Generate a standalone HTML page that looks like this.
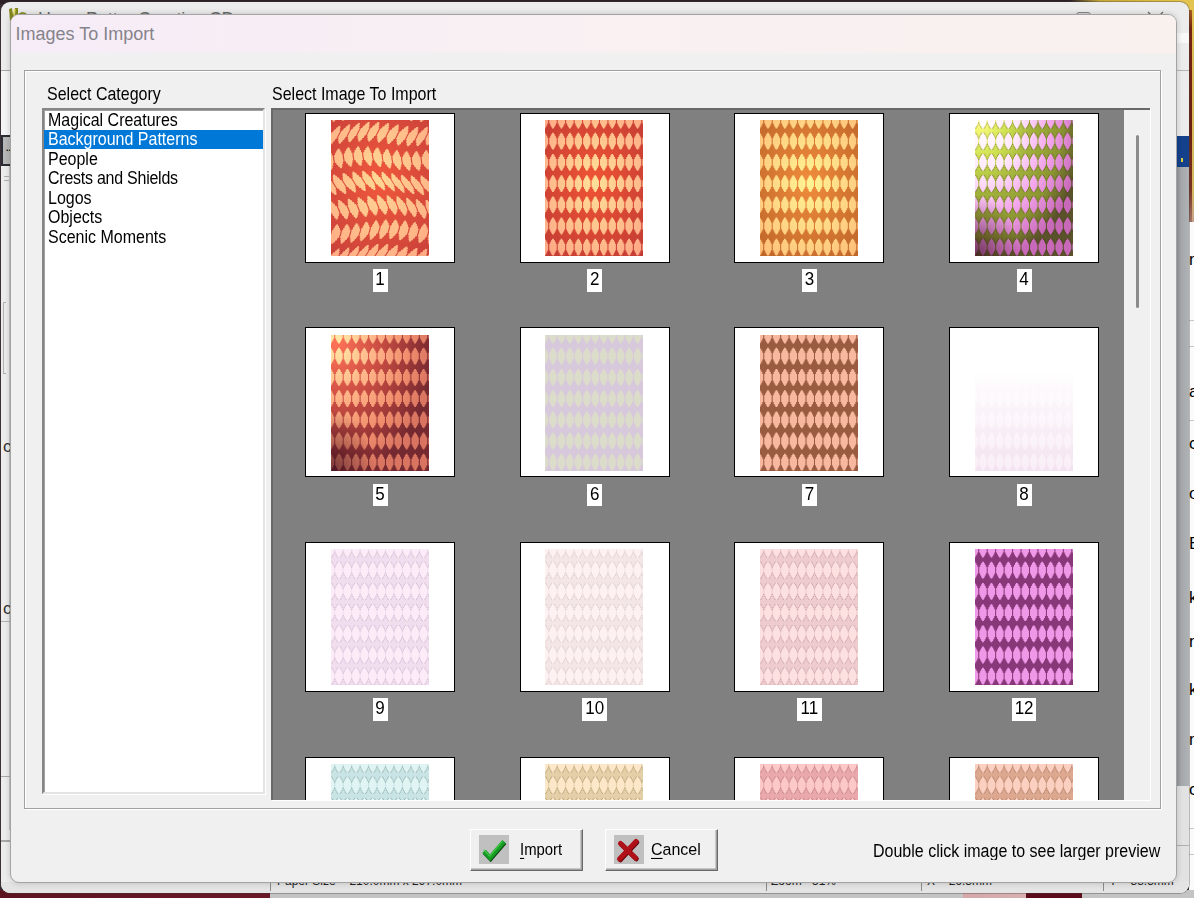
<!DOCTYPE html>
<html><head><meta charset="utf-8"><title>Images To Import</title>
<style>
html,body{margin:0;padding:0}
body{width:1194px;height:898px;position:relative;overflow:hidden;background:#3a2c34;font-family:"Liberation Sans",sans-serif;font-size:16px;color:#000}
div{box-sizing:border-box}
.abs{position:absolute}
#desk-top{left:0;top:0;width:1194px;height:4px;background:linear-gradient(90deg,#2a2026 0,#2a2026 1070px,#c8a838 1100px,#e8c848 1194px)}
#desk-right{left:1180px;top:0;width:14px;height:222px;background:linear-gradient(180deg,#e4c450 0,#dcbc58 60px,#d8b860 190px,#c8a088 222px)}
#desk-right:after{content:"";position:absolute;left:8px;top:10px;width:3.5px;height:212px;background:linear-gradient(180deg,#a85c20 0,#742414 18px,#6a2012 120px,#7a3424 180px,#a07468 212px)}
#desk-right2{left:1189px;top:222px;width:5px;height:676px;background:#fbfbfb;font-size:17px;overflow:hidden}
#desk-right2 span{position:absolute;left:0;white-space:nowrap}
#desk-right2 i{position:absolute;left:0;width:5px;height:1px;background:#c8c8c8}
#desk-bot{left:0;top:890px;width:1194px;height:8px;background:linear-gradient(90deg,#5c1420 0,#6a1826 270px,#c4c4c4 270px,#c4c4c4 963px,#d4a8a8 963px,#d8b0b0 1026px,#5c0c18 1026px,#5c0c18 1082px,#c4c4c4 1082px)}
#parent{left:1px;top:1.5px;width:1188px;height:891.5px;border-radius:9px;background:#ececec;overflow:hidden;box-shadow:0 0 0 1px rgba(60,60,60,.35)}
#ptitle{left:37px;top:7px;font-size:18px;color:#6a6a6a;white-space:nowrap;letter-spacing:-.15px}
#picon{left:6px;top:4px;width:22px;height:18px}
#pmax{left:1075px;top:10px;width:15px;height:12px;border:1.5px solid #8a8a8a;border-radius:3px;background:#d4d4d4}
#pclose{left:1144px;top:8px;font-size:22px;color:#707070;line-height:22px}
#pleft{left:0;top:68px;width:10px;height:760px}
#pright{left:1174px;top:0;width:14px;height:891px}
#status{left:0;top:880px;width:1188px;height:12px;background:#e4e4e4;font-size:12px;color:#222;overflow:hidden}
#status span{position:absolute;top:-7.5px;white-space:nowrap}
#status i{position:absolute;top:0;width:1px;height:9px;background:#8c8c8c}
#dlg{left:10px;top:14px;width:1166.5px;height:868.5px;border:1px solid #a3a3a3;border-radius:9px;background:#f0f0f0;overflow:hidden;box-shadow:0 0 6px rgba(0,0,0,.18)}
#tbar{left:0;top:0;width:1165px;height:39.5px;background:linear-gradient(90deg,#f6ecf8 0,#f8f0f2 45%,#f9f1ee 100%)}
#tbar:after{content:"";position:absolute;left:0;top:36px;width:100%;height:3.5px;background:linear-gradient(180deg,rgba(240,240,240,0),#f0f0f0)}
#ttext{left:4.5px;top:8.3px;font-size:18px;color:#85838a;white-space:nowrap;line-height:22px}
.lbl{white-space:nowrap;line-height:18px;transform:scaleY(1.14);transform-origin:0 100%}
#frame{left:13px;top:55px;width:1137px;height:739px;border:1px solid #a0a0a0;box-shadow:inset 1px 1px 0 #fff,1px 1px 0 #fff}
#list{left:31px;top:93px;width:223px;height:686px;background:#fff;border:2px solid;border-color:#868686 #e3e3e3 #e3e3e3 #868686;box-shadow:inset 1px 1px 0 #a0a0a0,1px 1px 0 #fff}
#list div{position:absolute;left:0;width:219px;height:19.5px;line-height:19.5px;padding-left:4px;white-space:nowrap}
#list div span{display:inline-block;transform:scaleY(1.09);transform-origin:0 78%;position:relative;top:.8px}
#list .sel{background:#0078d7;color:#fff}
#panel{left:260px;top:93px;width:878.5px;height:691.5px;background:#808080;border-top:2px solid #696969;border-left:2px solid #696969;overflow:hidden;box-shadow:1px 1px 0 #fff}
.th{position:absolute;width:150px;height:150px;background:#fff;border:1.5px solid #000}
.pat{position:absolute;left:24.8px;top:6.3px}
.num{position:absolute;height:22.6px;background:#fff;text-align:center;line-height:22.2px;font-size:17px}
.num span{display:inline-block;transform:scaleY(1.13);transform-origin:50% 60%}
.num{transform-origin:50% 50%}
#sb{left:850.5px;top:0;width:26px;height:690px;background:#f0f0f0}
#sbt{left:12.5px;top:25px;width:3px;height:173px;background:#8b8b8b;border-radius:1.5px}
.btn{height:42px;width:113px;background:#f0f0f0;border:1.5px solid;border-color:#fff #696969 #696969 #fff;box-shadow:inset -1.5px -1.5px 0 #a0a0a0}
.btn .ic{position:absolute;left:7.5px;top:4.5px;width:30px;height:29px;background:#c0c0c0}
.btn .tx{position:absolute;top:10.5px;line-height:18px;white-space:nowrap;transform:scaleY(1.06);transform-origin:0 100%}
.btn u{text-decoration-thickness:1px;text-underline-offset:2.5px}
</style></head><body>
<svg width="0" height="0" style="position:absolute"><defs>
<polygon id="dm" points="0.90,-8.40 0.90,-7.20 1.80,-7.20 1.80,-5.40 2.80,-5.40 2.80,-3.40 3.70,-3.40 3.70,0.00 3.70,0.00 3.70,3.40 2.80,3.40 2.80,5.40 1.80,5.40 1.80,7.20 0.90,7.20 0.90,8.40 -0.90,8.40 -0.90,7.20 -1.80,7.20 -1.80,5.40 -2.80,5.40 -2.80,3.40 -3.70,3.40 -3.70,0.00 -3.70,0.00 -3.70,-3.40 -2.80,-3.40 -2.80,-5.40 -1.80,-5.40 -1.80,-7.20 -0.90,-7.20 -0.90,-8.40"/>
<g id="drow"><use href="#dm" x="-0.49"/><use href="#dm" x="7.97"/><use href="#dm" x="16.43"/><use href="#dm" x="24.89"/><use href="#dm" x="33.35"/><use href="#dm" x="41.81"/><use href="#dm" x="50.27"/><use href="#dm" x="58.73"/><use href="#dm" x="67.19"/><use href="#dm" x="75.65"/><use href="#dm" x="84.11"/><use href="#dm" x="92.57"/><use href="#dm" x="101.03"/></g>
<g id="dgrid"><use href="#drow" y="0.00"/><use href="#drow" y="21.20"/><use href="#drow" y="42.40"/><use href="#drow" y="63.60"/><use href="#drow" y="84.80"/><use href="#drow" y="106.00"/><use href="#drow" y="127.20"/><use href="#drow" y="148.40"/></g>
<g id="dc"><rect x="-4.65" y="-3.65" width="1.1" height="1.1"/><rect x="-4.65" y="2.55" width="1.1" height="1.1"/><rect x="3.55" y="-3.65" width="1.1" height="1.1"/><rect x="3.55" y="2.55" width="1.1" height="1.1"/><rect x="-3.75" y="-5.65" width="1.1" height="1.1"/><rect x="-3.75" y="4.55" width="1.1" height="1.1"/><rect x="2.65" y="-5.65" width="1.1" height="1.1"/><rect x="2.65" y="4.55" width="1.1" height="1.1"/><rect x="-2.75" y="-7.45" width="1.1" height="1.1"/><rect x="-2.75" y="6.35" width="1.1" height="1.1"/><rect x="1.65" y="-7.45" width="1.1" height="1.1"/><rect x="1.65" y="6.35" width="1.1" height="1.1"/><rect x="-1.85" y="-8.65" width="1.1" height="1.1"/><rect x="-1.85" y="7.55" width="1.1" height="1.1"/><rect x="0.75" y="-8.65" width="1.1" height="1.1"/><rect x="0.75" y="7.55" width="1.1" height="1.1"/></g>
<g id="dcrow"><use href="#dc" x="-0.49"/><use href="#dc" x="7.97"/><use href="#dc" x="16.43"/><use href="#dc" x="24.89"/><use href="#dc" x="33.35"/><use href="#dc" x="41.81"/><use href="#dc" x="50.27"/><use href="#dc" x="58.73"/><use href="#dc" x="67.19"/><use href="#dc" x="75.65"/><use href="#dc" x="84.11"/><use href="#dc" x="92.57"/><use href="#dc" x="101.03"/></g>
<g id="dcgrid"><use href="#dcrow" y="0.00"/><use href="#dcrow" y="21.20"/><use href="#dcrow" y="42.40"/><use href="#dcrow" y="63.60"/><use href="#dcrow" y="84.80"/><use href="#dcrow" y="106.00"/><use href="#dcrow" y="127.20"/><use href="#dcrow" y="148.40"/></g>
<mask id="m" maskUnits="userSpaceOnUse" x="0" y="0" width="98" height="136"><use href="#dgrid" fill="#fff"/></mask>
<mask id="md" maskUnits="userSpaceOnUse" x="0" y="0" width="98" height="136"><use href="#dcgrid" fill="#fff"/></mask>
<clipPath id="cp"><rect width="98" height="136"/></clipPath>
<radialGradient id="d1" cx="50%" cy="45%" r="75%"><stop offset="0" stop-color="#f0583c"/><stop offset="1" stop-color="#c8403a"/></radialGradient>
<radialGradient id="l1" cx="50%" cy="45%" r="75%"><stop offset="0" stop-color="#ffd894"/><stop offset="1" stop-color="#ffa080"/></radialGradient>
<radialGradient id="d2" cx="50%" cy="45%" r="75%"><stop offset="0" stop-color="#f05434"/><stop offset="1" stop-color="#c03a34"/></radialGradient>
<radialGradient id="l2" cx="50%" cy="45%" r="75%"><stop offset="0" stop-color="#ffe098"/><stop offset="1" stop-color="#ffa484"/></radialGradient>
<radialGradient id="d3" cx="50%" cy="45%" r="75%"><stop offset="0" stop-color="#f08c3c"/><stop offset="1" stop-color="#bc6428"/></radialGradient>
<radialGradient id="l3" cx="50%" cy="45%" r="75%"><stop offset="0" stop-color="#fff494"/><stop offset="1" stop-color="#ffbc78"/></radialGradient>
<radialGradient id="d4" cx="0.05" cy="0.0" r="1.05"><stop offset="0" stop-color="#ffff80"/><stop offset=".28" stop-color="#cce050"/><stop offset=".5" stop-color="#a2b23c"/><stop offset=".8" stop-color="#8a9432"/><stop offset="1" stop-color="#5a5228"/></radialGradient>
<radialGradient id="l4" cx="0.05" cy="0.0" r="1.05"><stop offset="0" stop-color="#ffffff"/><stop offset=".38" stop-color="#ffe8fc"/><stop offset=".7" stop-color="#f2a4ea"/><stop offset="1" stop-color="#c868b8"/></radialGradient>
<radialGradient id="d5" cx="0.05" cy="0.05" r="1.0"><stop offset="0" stop-color="#ff7458"/><stop offset=".4" stop-color="#d05044"/><stop offset=".75" stop-color="#9c3838"/><stop offset="1" stop-color="#742830"/></radialGradient>
<radialGradient id="l5" cx="0.05" cy="0.05" r="1.0"><stop offset="0" stop-color="#ffeca8"/><stop offset=".4" stop-color="#ffb488"/><stop offset=".75" stop-color="#f08c6c"/><stop offset="1" stop-color="#d87460"/></radialGradient>
<radialGradient id="vg" cx="0" cy="1" r="0.45"><stop offset="0" stop-color="#300818" stop-opacity=".6"/><stop offset="1" stop-color="#300818" stop-opacity="0"/></radialGradient>
<linearGradient id="d8" x1="0" y1="0" x2="0" y2="1"><stop offset="0" stop-color="#ffffff"/><stop offset="0.25" stop-color="#ffffff"/><stop offset="1" stop-color="#f3e2f0"/></linearGradient>
<linearGradient id="l8" x1="0" y1="0" x2="0" y2="1"><stop offset="0" stop-color="#ffffff"/><stop offset="0.25" stop-color="#ffffff"/><stop offset="1" stop-color="#f9eef7"/></linearGradient>
</defs></svg>
<div class="abs" id="desk-top"></div>
<div class="abs" id="desk-right"></div>
<div class="abs" id="desk-right2">
<span style="top:28px">n</span><i style="top:98px"></i><i style="top:124px"></i><span style="top:160px">a</span><i style="top:198px"></i><span style="top:212px">c</span><span style="top:262px">o</span><span style="top:312px">B</span><span style="top:366px">k</span><span style="top:410px">n</span><span style="top:458px">k</span><span style="top:508px">n</span><span style="top:558px">c</span><i style="top:606px"></i><i style="top:632px"></i>
</div>
<div class="abs" id="desk-bot"></div>

<div class="abs" id="parent">
 <svg class="abs" id="picon" viewBox="0 0 22 18"><path d="M2 3 L5 2 L6 9 L8 2 L11 2 L11 8 L15 6 L19 7 L20 10 L16 12 L10 13 L7 18 L3 15 Z" fill="#84881c"/><path d="M6.5 3 L8.5 3 L8 10 L6.5 11Z" fill="#e4dc68"/><path d="M12 8 L17 7.5 L17 10 L12 10.5Z" fill="#a8a838"/></svg>
 <div class="abs" id="ptitle">Harry Potter Creative CD</div>
 <div class="abs" id="pmax"></div>
 <svg class="abs" style="left:1146px;top:9px" width="17" height="17" viewBox="0 0 17 17"><path d="M1 1 L16 16 M16 1 L1 16" stroke="#6c6c6c" stroke-width="1.4" fill="none"/></svg>
 <div class="abs" id="pleft">
  <div class="abs" style="left:0;top:0;width:10px;height:1px;background:#a8a8a8"></div>
  <div class="abs" style="left:0;top:1px;width:10px;height:64px;background:#f4f4f4;border-right:1px solid #b4b4b4"></div>
  <div class="abs" style="left:0;top:65px;width:10px;height:31px;background:#b8b8b8;border:2px solid #2c2c34;border-right:none;font-size:9px;line-height:22px;font-weight:bold;text-align:right">..</div>
  <div class="abs" style="left:3px;top:106px;width:6px;height:1px;background:#b0b0b0"></div>
  <div class="abs" style="left:3px;top:110px;width:6px;height:1px;background:#b0b0b0"></div>
  <div class="abs" style="left:8px;top:96px;width:1px;height:664px;background:#c4c4c4"></div>
  <div class="abs" style="left:2px;top:232px;width:3px;height:72px;border:1px solid #b0b0b0;border-right:none"></div>
  <div class="abs" style="left:2px;top:368px;font-size:17px;line-height:18px;color:#333">c</div>
  <div class="abs" style="left:2px;top:530px;font-size:17px;line-height:18px;color:#333">c</div>
  <div class="abs" style="left:0;top:551px;width:9px;height:1px;background:#b0b0b0"></div>
  <div class="abs" style="left:0;top:706px;width:9px;height:1px;background:#a8a8a8"></div>
  <div class="abs" style="left:0;top:770px;width:9px;height:2px;background:#a8a8a8"></div>
 </div>
 <div class="abs" id="pright">
  <div class="abs" style="left:0;top:31px;width:14px;height:10px;background:#f8f8f8"></div>
  <div class="abs" style="left:0;top:68px;width:14px;height:1px;background:#b4b4b4"></div>
  <div class="abs" style="left:0;top:134px;width:14px;height:31px;background:#14408c"><div class="abs" style="left:6px;top:22px;width:2px;height:4px;background:#d8d040"></div></div>
  <div class="abs" style="left:0;top:165px;width:14px;height:619px;background:linear-gradient(90deg,#8a8e92,#a4a7aa 40%,#b0b3b6)"></div>
  <div class="abs" style="left:0;top:784px;width:14px;height:107px;background:#e2e2e2"></div>
  <div class="abs" style="left:0;top:843px;width:14px;height:1px;background:#b0b0b0"></div>
 </div>
 <div class="abs" id="status">
  <i style="left:269px"></i><span style="left:276px">Paper Size = 210.0mm x 297.0mm</span>
  <i style="left:765px"></i><span style="left:770px">Zoom= 51%</span>
  <i style="left:920px"></i><span style="left:926px">X = 26.3mm</span>
  <i style="left:1102px"></i><span style="left:1108px">Y = 38.3mm</span>
 </div>
</div>

<div class="abs" id="dlg">
 <div class="abs" id="tbar"></div>
 <div class="abs" id="ttext">Images To Import</div>
 <div class="abs" id="frame"></div>
 <div class="abs lbl" style="left:36px;top:72.2px">Select Category</div>
 <div class="abs lbl" style="left:261px;top:72.2px">Select Image To Import</div>
 <div class="abs" id="list">
  <div style="top:0"><span>Magical Creatures</span></div>
  <div style="top:19.5px" class="sel"><span>Background Patterns</span></div>
  <div style="top:39px"><span>People</span></div>
  <div style="top:58.5px"><span style="letter-spacing:-.25px">Crests and Shields</span></div>
  <div style="top:78px"><span>Logos</span></div>
  <div style="top:97.5px"><span>Objects</span></div>
  <div style="top:117px"><span>Scenic Moments</span></div>
 </div>
 <div class="abs" id="panel">
<div class="th" style="left:32.1px;top:2.9px"><svg class="pat" width="98" height="136" viewBox="0 0 98 136"><rect width="98" height="136" fill="url(#d1)"/><path clip-path="url(#cp)" fill="url(#l1)" d="M-2.6 103.8L-2.6 105.2L-1.6 105.3L-1.8 107.4L-0.6 107.5L-0.9 109.8L0.1 109.9L-0.8 113.8L-0.8 113.8L-2.1 117.7L-3.1 117.6L-4.0 119.9L-5.2 119.8L-6.1 121.9L-7.2 121.8L-7.8 123.1L-9.9 122.9L-9.2 121.5L-10.3 121.4L-9.3 119.3L-10.5 119.2L-9.5 116.9L-10.6 116.7L-9.3 112.8L-9.3 112.8L-8.4 108.9L-7.4 109.0L-7.0 106.7L-5.9 106.9L-5.7 104.8L-4.7 105.0L-4.7 103.6ZM4.2 -17.4L3.7 -16.0L4.7 -16.0L3.8 -13.9L4.9 -13.9L3.8 -11.6L4.8 -11.6L2.7 -7.7L2.7 -7.7L0.4 -3.8L-0.7 -3.8L-2.1 -1.5L-3.3 -1.5L-4.6 0.6L-5.6 0.6L-6.5 1.9L-8.6 1.9L-7.7 0.5L-8.7 0.4L-7.4 -1.6L-8.6 -1.7L-7.1 -4.0L-8.2 -4.1L-5.8 -8.0L-5.8 -8.0L-3.7 -11.9L-2.6 -11.8L-1.5 -14.1L-0.4 -14.1L0.6 -16.1L1.6 -16.1L2.2 -17.5ZM-0.8 80.1L-0.0 81.5L1.0 81.5L2.1 83.6L3.3 83.6L4.5 85.9L5.5 85.9L7.2 89.8L7.2 89.8L8.6 93.7L7.6 93.7L8.2 96.0L7.1 96.0L7.5 98.1L6.5 98.1L6.7 99.5L4.7 99.4L4.4 98.0L3.4 97.9L3.0 95.9L1.8 95.8L1.2 93.5L0.1 93.4L-1.3 89.5L-1.3 89.5L-3.0 85.6L-2.0 85.7L-3.2 83.4L-2.0 83.5L-3.1 81.4L-2.1 81.4L-2.9 80.1ZM7.1 104.5L7.1 105.9L8.1 105.9L8.0 108.0L9.1 108.0L8.8 110.3L9.8 110.3L9.0 114.2L9.0 114.2L7.7 118.1L6.6 118.1L5.7 120.4L4.5 120.4L3.6 122.5L2.6 122.5L1.9 123.8L-0.2 123.8L0.5 122.4L-0.5 122.3L0.4 120.3L-0.7 120.2L0.2 117.9L-0.8 117.8L0.4 113.9L0.4 113.9L1.3 110.0L2.4 110.1L2.7 107.8L3.8 107.8L4.0 105.8L5.0 105.8L5.1 104.4ZM14.0 -17.6L13.4 -16.3L14.4 -16.3L13.5 -14.3L14.7 -14.4L13.5 -12.1L14.6 -12.2L12.4 -8.3L12.4 -8.3L10.1 -4.3L9.0 -4.2L7.6 -1.9L6.5 -1.8L5.1 0.2L4.1 0.3L3.2 1.7L1.1 1.8L2.0 0.4L1.0 0.5L2.3 -1.6L1.2 -1.5L2.6 -3.8L1.6 -3.8L3.9 -7.7L3.9 -7.7L6.1 -11.6L7.1 -11.7L8.2 -14.0L9.4 -14.0L10.3 -16.1L11.3 -16.1L11.9 -17.5ZM-0.1 6.7L-0.9 8.1L0.1 8.0L-1.2 10.1L-0.0 10.0L-1.4 12.3L-0.3 12.2L-2.5 16.1L-2.5 16.1L-4.3 20.0L-5.3 20.1L-6.3 22.4L-7.4 22.5L-8.2 24.6L-9.2 24.7L-9.6 26.1L-11.7 26.2L-11.3 24.8L-12.3 24.9L-11.6 22.8L-12.7 22.8L-11.8 20.5L-12.8 20.6L-11.0 16.7L-11.0 16.7L-8.8 12.7L-7.8 12.7L-6.4 10.4L-5.3 10.4L-4.0 8.3L-3.0 8.3L-2.1 6.9ZM-6.0 55.5L-5.2 56.9L-4.2 56.8L-3.1 58.9L-1.9 58.8L-0.6 61.1L0.4 61.0L2.8 64.9L2.8 64.9L5.3 68.8L4.3 68.9L5.8 71.2L4.6 71.3L6.0 73.4L4.9 73.4L5.8 74.8L3.7 75.0L2.9 73.6L1.8 73.6L0.5 71.6L-0.7 71.6L-2.1 69.3L-3.2 69.3L-5.7 65.4L-5.7 65.4L-8.1 61.5L-7.0 61.5L-8.4 59.2L-7.2 59.1L-8.3 57.1L-7.3 57.0L-8.0 55.6ZM8.9 79.9L9.7 81.3L10.7 81.2L11.9 83.3L13.0 83.2L14.2 85.5L15.2 85.4L17.0 89.3L17.0 89.3L18.4 93.2L17.3 93.3L18.0 95.6L16.8 95.7L17.3 97.7L16.2 97.8L16.5 99.2L14.4 99.3L14.2 98.0L13.1 98.0L12.7 95.9L11.5 96.0L10.9 93.7L9.9 93.7L8.5 89.8L8.5 89.8L6.7 85.9L7.7 85.9L6.6 83.6L7.7 83.5L6.6 81.4L7.6 81.4L6.8 80.0ZM16.9 104.3L16.8 105.6L17.9 105.6L17.7 107.6L18.9 107.5L18.5 109.8L19.6 109.7L18.7 113.6L18.7 113.6L17.4 117.6L16.4 117.7L15.4 120.0L14.3 120.1L13.3 122.1L12.3 122.2L11.6 123.6L9.5 123.7L10.2 122.3L9.2 122.4L10.1 120.3L9.0 120.4L9.9 118.1L8.9 118.1L10.2 114.2L10.2 114.2L11.1 110.3L12.1 110.2L12.4 107.9L13.6 107.9L13.7 105.8L14.8 105.8L14.8 104.4ZM8.8 128.6L8.0 130.0L9.1 129.9L7.8 132.0L8.9 131.9L7.5 134.2L8.5 134.1L6.0 138.0L6.0 138.0L3.5 141.9L2.5 142.0L1.0 144.3L-0.1 144.4L-1.4 146.5L-2.4 146.6L-3.2 148.0L-5.3 148.1L-4.5 146.7L-5.5 146.8L-4.3 144.7L-5.4 144.7L-4.0 142.4L-5.0 142.5L-2.5 138.6L-2.5 138.6L0.0 134.6L1.1 134.6L2.5 132.3L3.7 132.3L4.9 130.2L6.0 130.2L6.8 128.8ZM23.7 -18.7L23.1 -17.3L24.2 -17.5L23.2 -15.4L24.4 -15.6L23.3 -13.3L24.3 -13.4L22.2 -9.5L22.2 -9.5L19.8 -5.6L18.8 -5.5L17.3 -3.2L16.2 -3.0L14.9 -0.9L13.8 -0.8L12.9 0.6L10.9 0.9L11.7 -0.5L10.7 -0.4L12.0 -2.4L10.9 -2.3L12.3 -4.6L11.3 -4.5L13.6 -8.4L13.6 -8.4L15.8 -12.3L16.8 -12.4L18.0 -14.7L19.1 -14.8L20.0 -16.9L21.1 -17.1L21.6 -18.4ZM9.7 5.7L8.8 7.0L9.8 6.9L8.6 9.0L9.7 8.8L8.4 11.1L9.4 10.9L7.3 14.8L7.3 14.8L5.4 18.8L4.4 18.9L3.4 21.2L2.3 21.4L1.6 23.5L0.5 23.6L0.1 25.0L-2.0 25.3L-1.5 23.9L-2.6 24.0L-1.8 22.0L-3.0 22.1L-2.1 19.8L-3.1 19.9L-1.2 16.0L-1.2 16.0L0.9 12.1L1.9 12.0L3.3 9.7L4.4 9.5L5.7 7.5L6.7 7.3L7.6 5.9ZM-1.0 30.0L-1.2 31.4L-0.2 31.3L-0.3 33.3L0.8 33.2L0.8 35.5L1.8 35.3L2.1 39.2L2.1 39.2L2.9 43.1L1.8 43.3L2.5 45.6L1.3 45.8L2.0 47.8L1.0 48.0L1.5 49.4L-0.6 49.6L-1.1 48.3L-2.1 48.4L-2.8 46.3L-4.0 46.5L-4.6 44.2L-5.7 44.3L-6.4 40.4L-6.4 40.4L-6.7 36.5L-5.7 36.4L-5.6 34.1L-4.5 33.9L-4.3 31.8L-3.3 31.7L-3.1 30.3ZM3.8 54.4L4.5 55.8L5.5 55.7L6.7 57.7L7.8 57.6L9.1 59.9L10.2 59.7L12.6 63.6L12.6 63.6L15.1 67.5L14.0 67.7L15.5 70.0L14.4 70.1L15.7 72.2L14.7 72.4L15.5 73.7L13.5 74.0L12.6 72.6L11.5 72.8L10.2 70.7L9.1 70.9L7.6 68.6L6.5 68.7L4.0 64.8L4.0 64.8L1.7 60.8L2.7 60.7L1.4 58.4L2.5 58.3L1.4 56.2L2.4 56.1L1.7 54.7ZM18.6 78.8L19.4 80.2L20.4 80.0L21.6 82.1L22.7 81.9L23.9 84.2L24.9 84.1L26.7 88.0L26.7 88.0L28.1 91.9L27.1 92.1L27.7 94.4L26.6 94.5L27.0 96.6L26.0 96.7L26.2 98.1L24.1 98.4L23.9 97.0L22.9 97.2L22.4 95.1L21.3 95.2L20.6 92.9L19.6 93.0L18.2 89.1L18.2 89.1L16.4 85.2L17.5 85.1L16.3 82.8L17.4 82.7L16.3 80.6L17.3 80.5L16.6 79.1ZM26.6 103.2L26.5 104.6L27.6 104.4L27.4 106.5L28.6 106.3L28.3 108.6L29.3 108.5L28.4 112.4L28.4 112.4L27.1 116.3L26.1 116.4L25.1 118.7L24.0 118.9L23.1 121.0L22.0 121.1L21.3 122.5L19.3 122.8L20.0 121.4L18.9 121.5L19.9 119.5L18.7 119.6L19.6 117.3L18.6 117.4L19.9 113.5L19.9 113.5L20.8 109.6L21.8 109.5L22.1 107.2L23.3 107.1L23.4 105.0L24.5 104.8L24.5 103.5ZM18.6 127.6L17.8 128.9L18.8 128.8L17.5 130.9L18.7 130.7L17.2 133.0L18.3 132.8L15.7 136.7L15.7 136.7L13.2 140.7L12.2 140.8L10.8 143.1L9.6 143.3L8.3 145.4L7.3 145.5L6.5 146.9L4.4 147.2L5.2 145.8L4.2 145.9L5.5 143.9L4.3 144.0L5.8 141.7L4.7 141.8L7.2 137.9L7.2 137.9L9.8 134.0L10.8 133.9L12.2 131.6L13.4 131.4L14.7 129.4L15.7 129.2L16.5 127.8ZM19.4 4.2L18.5 5.5L19.6 5.4L18.3 7.4L19.5 7.3L18.1 9.6L19.1 9.4L17.0 13.3L17.0 13.3L15.1 17.2L14.1 17.4L13.2 19.7L12.0 19.9L11.3 21.9L10.3 22.1L9.8 23.5L7.8 23.8L8.2 22.4L7.1 22.6L7.9 20.5L6.7 20.7L7.7 18.4L6.6 18.6L8.5 14.7L8.5 14.7L10.6 10.7L11.7 10.6L13.0 8.3L14.2 8.1L15.4 6.0L16.5 5.9L17.3 4.5ZM8.7 28.5L8.5 29.9L9.5 29.7L9.4 31.8L10.5 31.6L10.5 33.9L11.5 33.8L11.8 37.7L11.8 37.7L12.6 41.6L11.6 41.8L12.2 44.1L11.0 44.2L11.7 46.3L10.7 46.5L11.2 47.9L9.2 48.2L8.6 46.8L7.6 47.0L6.9 44.9L5.8 45.1L5.1 42.8L4.1 42.9L3.3 39.0L3.3 39.0L3.0 35.1L4.1 35.0L4.1 32.7L5.2 32.5L5.4 30.4L6.4 30.2L6.6 28.9ZM13.5 52.9L14.2 54.3L15.3 54.1L16.4 56.2L17.5 56.0L18.9 58.3L19.9 58.2L22.3 62.1L22.3 62.1L24.8 66.0L23.8 66.1L25.2 68.4L24.1 68.6L25.4 70.7L24.4 70.9L25.3 72.2L23.2 72.6L22.3 71.2L21.3 71.3L19.9 69.3L18.8 69.5L17.3 67.2L16.3 67.3L13.8 63.4L13.8 63.4L11.4 59.5L12.4 59.3L11.1 57.0L12.2 56.9L11.1 54.8L12.1 54.6L11.4 53.2ZM28.4 77.3L29.1 78.7L30.2 78.5L31.3 80.6L32.5 80.4L33.6 82.7L34.7 82.5L36.4 86.5L36.4 86.5L37.8 90.4L36.8 90.5L37.4 92.8L36.3 93.0L36.7 95.1L35.7 95.2L35.9 96.6L33.9 96.9L33.6 95.6L32.6 95.7L32.1 93.7L31.0 93.8L30.4 91.5L29.3 91.7L27.9 87.8L27.9 87.8L26.2 83.9L27.2 83.7L26.0 81.4L27.2 81.2L26.0 79.2L27.1 79.0L26.3 77.6ZM36.3 101.7L36.3 103.1L37.3 102.9L37.2 105.0L38.3 104.8L38.0 107.1L39.0 106.9L38.1 110.8L38.1 110.8L36.9 114.7L35.8 114.9L34.9 117.2L33.7 117.4L32.8 119.4L31.7 119.6L31.1 121.0L29.0 121.3L29.7 119.9L28.6 120.1L29.6 118.0L28.4 118.2L29.4 115.9L28.3 116.1L29.6 112.2L29.6 112.2L30.5 108.3L31.6 108.1L31.9 105.8L33.0 105.6L33.2 103.5L34.2 103.4L34.2 102.0ZM28.3 126.1L27.5 127.4L28.5 127.3L27.3 129.3L28.4 129.2L27.0 131.5L28.0 131.3L25.5 135.2L25.5 135.2L23.0 139.1L21.9 139.3L20.5 141.6L19.3 141.8L18.1 143.8L17.0 144.0L16.2 145.4L14.1 145.7L15.0 144.3L13.9 144.5L15.2 142.4L14.0 142.6L15.5 140.3L14.5 140.5L17.0 136.6L17.0 136.6L19.5 132.6L20.5 132.5L22.0 130.2L23.1 130.0L24.4 127.9L25.4 127.8L26.2 126.4ZM29.1 2.8L28.3 4.2L29.3 4.0L28.0 6.1L29.2 6.0L27.8 8.3L28.9 8.2L26.7 12.1L26.7 12.1L24.9 16.0L23.8 16.1L22.9 18.4L21.8 18.5L21.0 20.6L20.0 20.7L19.6 22.1L17.5 22.3L17.9 21.0L16.9 21.1L17.6 19.0L16.5 19.2L17.4 16.9L16.4 17.0L18.2 13.1L18.2 13.1L20.4 9.2L21.4 9.1L22.7 6.8L23.9 6.6L25.2 4.5L26.2 4.4L27.1 3.0ZM18.4 27.2L18.2 28.5L19.3 28.4L19.1 30.5L20.3 30.4L20.2 32.7L21.3 32.6L21.6 36.5L21.6 36.5L22.3 40.4L21.3 40.5L21.9 42.8L20.8 42.9L21.5 45.0L20.4 45.1L21.0 46.5L18.9 46.7L18.4 45.3L17.3 45.5L16.6 43.4L15.5 43.6L14.8 41.3L13.8 41.4L13.1 37.5L13.1 37.5L12.8 33.6L13.8 33.5L13.8 31.2L15.0 31.0L15.1 28.9L16.2 28.8L16.4 27.4ZM23.2 51.5L23.9 52.9L25.0 52.8L26.1 54.9L27.3 54.8L28.6 57.1L29.6 57.0L32.0 60.9L32.0 60.9L34.5 64.8L33.5 64.9L35.0 67.2L33.8 67.3L35.1 69.4L34.1 69.5L35.0 70.9L32.9 71.1L32.0 69.7L31.0 69.9L29.7 67.8L28.5 68.0L27.0 65.7L26.0 65.8L23.5 61.9L23.5 61.9L21.1 58.0L22.1 57.8L20.8 55.5L22.0 55.4L20.8 53.3L21.9 53.2L21.2 51.8ZM38.1 75.9L38.9 77.3L39.9 77.2L41.0 79.3L42.2 79.1L43.4 81.4L44.4 81.3L46.2 85.2L46.2 85.2L47.6 89.2L46.5 89.3L47.2 91.6L46.0 91.7L46.5 93.7L45.4 93.9L45.7 95.2L43.6 95.5L43.4 94.1L42.3 94.2L41.9 92.2L40.7 92.3L40.1 90.0L39.0 90.2L37.6 86.3L37.6 86.3L35.9 82.4L36.9 82.2L35.8 79.9L36.9 79.8L35.8 77.7L36.8 77.5L36.0 76.2ZM46.0 100.3L46.0 101.7L47.0 101.6L46.9 103.6L48.0 103.5L47.7 105.8L48.8 105.7L47.9 109.6L47.9 109.6L46.6 113.5L45.5 113.6L44.6 115.9L43.5 116.1L42.5 118.1L41.5 118.2L40.8 119.6L38.7 119.9L39.4 118.5L38.4 118.6L39.3 116.6L38.2 116.7L39.1 114.4L38.1 114.6L39.4 110.7L39.4 110.7L40.2 106.7L41.3 106.6L41.6 104.3L42.8 104.1L42.9 102.1L43.9 101.9L44.0 100.5ZM38.0 124.7L37.2 126.1L38.3 125.9L37.0 128.0L38.1 127.9L36.7 130.2L37.7 130.1L35.2 134.0L35.2 134.0L32.7 137.9L31.7 138.0L30.2 140.3L29.1 140.4L27.8 142.5L26.8 142.6L25.9 144.0L23.9 144.2L24.7 142.9L23.7 143.0L24.9 140.9L23.8 141.1L25.2 138.8L24.2 138.9L26.7 135.0L26.7 135.0L29.2 131.1L30.2 131.0L31.7 128.7L32.8 128.5L34.1 126.4L35.1 126.3L36.0 124.9ZM38.9 2.1L38.0 3.4L39.0 3.4L37.8 5.5L38.9 5.5L37.6 7.8L38.6 7.8L36.5 11.7L36.5 11.7L34.6 15.6L33.6 15.6L32.6 17.9L31.5 17.9L30.7 20.0L29.7 20.0L29.3 21.4L27.2 21.5L27.6 20.1L26.6 20.1L27.3 18.1L26.2 18.1L27.1 15.8L26.1 15.9L27.9 12.0L27.9 12.0L30.1 8.1L31.1 8.0L32.5 5.7L33.6 5.6L34.9 3.6L35.9 3.5L36.8 2.1ZM28.2 26.4L28.0 27.8L29.0 27.8L28.8 29.9L30.0 29.9L30.0 32.2L31.0 32.2L31.3 36.1L31.3 36.1L32.0 40.0L31.0 40.0L31.6 42.3L30.5 42.3L31.2 44.4L30.2 44.4L30.7 45.8L28.6 45.8L28.1 44.5L27.1 44.5L26.4 42.4L25.2 42.5L24.6 40.2L23.5 40.3L22.8 36.4L22.8 36.4L22.5 32.5L23.5 32.4L23.6 30.1L24.7 30.0L24.9 28.0L25.9 27.9L26.1 26.5ZM33.0 50.8L33.7 52.2L34.7 52.2L35.8 54.2L37.0 54.2L38.3 56.5L39.3 56.5L41.7 60.4L41.7 60.4L44.2 64.4L43.2 64.4L44.7 66.7L43.5 66.7L44.9 68.7L43.8 68.8L44.7 70.1L42.6 70.2L41.8 68.8L40.7 68.9L39.4 66.8L38.3 66.9L36.8 64.6L35.7 64.7L33.2 60.8L33.2 60.8L30.8 56.9L31.9 56.8L30.5 54.5L31.7 54.4L30.6 52.3L31.6 52.3L30.9 50.9ZM47.8 75.2L48.6 76.6L49.6 76.6L50.8 78.6L51.9 78.6L53.1 80.9L54.1 80.9L55.9 84.8L55.9 84.8L57.3 88.7L56.3 88.7L56.9 91.0L55.7 91.0L56.2 93.1L55.2 93.1L55.4 94.5L53.3 94.6L53.1 93.2L52.1 93.3L51.6 91.2L50.5 91.3L49.8 89.0L48.8 89.1L47.4 85.1L47.4 85.1L45.6 81.2L46.7 81.2L45.5 78.9L46.6 78.8L45.5 76.7L46.5 76.7L45.7 75.3ZM55.8 99.6L55.7 101.0L56.8 100.9L56.6 103.0L57.8 103.0L57.5 105.3L58.5 105.3L57.6 109.2L57.6 109.2L56.3 113.1L55.3 113.1L54.3 115.4L53.2 115.4L52.2 117.5L51.2 117.5L50.5 118.9L48.5 119.0L49.1 117.6L48.1 117.7L49.0 115.6L47.9 115.7L48.8 113.4L47.8 113.4L49.1 109.5L49.1 109.5L50.0 105.6L51.0 105.5L51.3 103.2L52.5 103.2L52.6 101.1L53.7 101.0L53.7 99.7ZM47.8 124.0L46.9 125.3L48.0 125.3L46.7 127.4L47.9 127.4L46.4 129.7L47.5 129.7L44.9 133.6L44.9 133.6L42.4 137.5L41.4 137.5L39.9 139.8L38.8 139.8L37.5 141.9L36.5 141.9L35.7 143.3L33.6 143.4L34.4 142.0L33.4 142.0L34.7 140.0L33.5 140.0L34.9 137.7L33.9 137.8L36.4 133.9L36.4 133.9L38.9 130.0L40.0 129.9L41.4 127.6L42.6 127.5L43.8 125.5L44.9 125.4L45.7 124.0ZM48.6 2.3L47.7 3.6L48.8 3.7L47.5 5.8L48.6 5.9L47.3 8.2L48.3 8.3L46.2 12.2L46.2 12.2L44.3 16.1L43.3 16.0L42.4 18.3L41.2 18.2L40.5 20.3L39.4 20.2L39.0 21.6L36.9 21.5L37.4 20.1L36.3 20.0L37.1 18.0L35.9 17.9L36.9 15.6L35.8 15.6L37.7 11.7L37.7 11.7L39.8 7.8L40.8 7.8L42.2 5.5L43.4 5.5L44.6 3.5L45.7 3.5L46.5 2.1ZM37.9 26.6L37.7 28.0L38.7 28.1L38.6 30.2L39.7 30.3L39.7 32.6L40.7 32.7L41.0 36.6L41.0 36.6L41.8 40.5L40.7 40.4L41.4 42.7L40.2 42.6L40.9 44.7L39.9 44.6L40.4 46.0L38.3 45.8L37.8 44.5L36.8 44.4L36.1 42.3L34.9 42.3L34.3 40.0L33.3 40.0L32.5 36.1L32.5 36.1L32.2 32.2L33.2 32.2L33.3 29.9L34.4 29.9L34.6 27.9L35.6 27.9L35.8 26.5ZM42.7 51.0L43.4 52.4L44.4 52.5L45.6 54.6L46.7 54.7L48.0 57.0L49.1 57.0L51.5 61.0L51.5 61.0L54.0 64.9L52.9 64.8L54.4 67.1L53.3 67.0L54.6 69.0L53.6 69.0L54.4 70.3L52.4 70.2L51.5 68.8L50.5 68.8L49.1 66.7L48.0 66.7L46.5 64.4L45.5 64.4L43.0 60.5L43.0 60.5L40.6 56.5L41.6 56.6L40.3 54.3L41.4 54.3L40.3 52.2L41.3 52.3L40.6 50.9ZM57.5 75.4L58.3 76.8L59.4 76.9L60.5 78.9L61.7 79.0L62.8 81.3L63.9 81.4L65.6 85.3L65.6 85.3L67.0 89.2L66.0 89.2L66.6 91.5L65.5 91.4L65.9 93.4L64.9 93.3L65.1 94.7L63.1 94.6L62.8 93.2L61.8 93.2L61.3 91.1L60.2 91.1L59.5 88.8L58.5 88.7L57.1 84.8L57.1 84.8L55.4 80.9L56.4 80.9L55.2 78.6L56.4 78.7L55.2 76.6L56.3 76.7L55.5 75.3ZM65.5 99.8L65.5 101.2L66.5 101.2L66.3 103.3L67.5 103.4L67.2 105.7L68.2 105.8L67.3 109.7L67.3 109.7L66.0 113.6L65.0 113.5L64.1 115.8L62.9 115.7L62.0 117.8L60.9 117.7L60.3 119.1L58.2 119.0L58.9 117.6L57.8 117.6L58.8 115.5L57.6 115.4L58.6 113.1L57.5 113.1L58.8 109.2L58.8 109.2L59.7 105.3L60.7 105.3L61.1 103.0L62.2 103.1L62.4 101.0L63.4 101.0L63.4 99.7ZM57.5 124.2L56.7 125.5L57.7 125.6L56.4 127.7L57.6 127.8L56.1 130.1L57.2 130.2L54.7 134.1L54.7 134.1L52.1 138.0L51.1 137.9L49.7 140.2L48.5 140.1L47.3 142.2L46.2 142.1L45.4 143.5L43.3 143.4L44.2 142.0L43.1 141.9L44.4 139.9L43.2 139.8L44.7 137.5L43.6 137.5L46.2 133.6L46.2 133.6L48.7 129.7L49.7 129.7L51.2 127.4L52.3 127.4L53.6 125.4L54.6 125.4L55.4 124.0ZM58.3 3.3L57.5 4.7L58.5 4.9L57.2 6.9L58.4 7.1L57.0 9.4L58.0 9.6L55.9 13.5L55.9 13.5L54.1 17.4L53.0 17.2L52.1 19.5L50.9 19.3L50.2 21.4L49.2 21.3L48.7 22.6L46.7 22.4L47.1 21.0L46.1 20.9L46.8 18.8L45.6 18.6L46.6 16.3L45.5 16.2L47.4 12.3L47.4 12.3L49.5 8.4L50.6 8.5L51.9 6.2L53.1 6.4L54.4 4.3L55.4 4.4L56.3 3.0ZM47.6 27.7L47.4 29.1L48.5 29.2L48.3 31.3L49.5 31.5L49.4 33.8L50.5 33.9L50.8 37.8L50.8 37.8L51.5 41.8L50.5 41.6L51.1 43.9L50.0 43.7L50.7 45.8L49.6 45.6L50.1 47.0L48.1 46.7L47.5 45.4L46.5 45.2L45.8 43.2L44.7 43.0L44.0 40.7L43.0 40.6L42.2 36.7L42.2 36.7L41.9 32.8L43.0 32.9L43.0 30.6L44.2 30.7L44.3 28.7L45.4 28.8L45.5 27.4ZM52.4 52.1L53.1 53.5L54.2 53.6L55.3 55.7L56.4 55.9L57.8 58.2L58.8 58.3L61.2 62.2L61.2 62.2L63.7 66.1L62.7 66.0L64.2 68.3L63.0 68.1L64.3 70.2L63.3 70.0L64.2 71.4L62.1 71.1L61.2 69.7L60.2 69.6L58.9 67.5L57.7 67.4L56.2 65.1L55.2 65.0L52.7 61.1L52.7 61.1L50.3 57.2L51.3 57.3L50.0 55.0L51.2 55.1L50.0 53.1L51.1 53.2L50.4 51.8ZM67.3 76.5L68.1 77.8L69.1 78.0L70.2 80.1L71.4 80.2L72.6 82.5L73.6 82.7L75.3 86.6L75.3 86.6L76.7 90.5L75.7 90.4L76.4 92.7L75.2 92.5L75.7 94.6L74.6 94.4L74.8 95.8L72.8 95.5L72.5 94.1L71.5 94.0L71.1 91.9L69.9 91.8L69.3 89.5L68.2 89.4L66.8 85.5L66.8 85.5L65.1 81.6L66.1 81.7L64.9 79.4L66.1 79.5L65.0 77.4L66.0 77.6L65.2 76.2ZM75.2 100.8L75.2 102.2L76.2 102.4L76.1 104.4L77.2 104.6L76.9 106.9L77.9 107.1L77.1 111.0L77.1 111.0L75.8 114.9L74.7 114.7L73.8 117.0L72.6 116.9L71.7 118.9L70.7 118.8L70.0 120.2L67.9 119.9L68.6 118.5L67.6 118.4L68.5 116.3L67.4 116.2L68.3 113.9L67.3 113.8L68.6 109.8L68.6 109.8L69.4 105.9L70.5 106.0L70.8 103.7L71.9 103.9L72.1 101.8L73.1 101.9L73.2 100.6ZM67.2 125.2L66.4 126.6L67.4 126.8L66.2 128.8L67.3 129.0L65.9 131.3L66.9 131.5L64.4 135.4L64.4 135.4L61.9 139.3L60.8 139.1L59.4 141.4L58.2 141.2L57.0 143.3L56.0 143.2L55.1 144.5L53.1 144.3L53.9 142.9L52.8 142.8L54.1 140.7L53.0 140.5L54.4 138.2L53.4 138.1L55.9 134.2L55.9 134.2L58.4 130.3L59.4 130.4L60.9 128.1L62.0 128.3L63.3 126.2L64.3 126.3L65.2 124.9ZM68.1 4.8L67.2 6.2L68.2 6.4L66.9 8.4L68.1 8.6L66.7 10.9L67.8 11.1L65.6 15.0L65.6 15.0L63.8 18.9L62.8 18.7L61.8 21.0L60.7 20.9L59.9 22.9L58.9 22.8L58.5 24.2L56.4 23.8L56.8 22.4L55.8 22.3L56.5 20.2L55.4 20.0L56.3 17.7L55.3 17.6L57.1 13.6L57.1 13.6L59.3 9.7L60.3 9.9L61.7 7.6L62.8 7.8L64.1 5.7L65.1 5.9L66.0 4.5ZM57.3 29.2L57.2 30.6L58.2 30.8L58.0 32.8L59.2 33.0L59.1 35.3L60.2 35.5L60.5 39.4L60.5 39.4L61.2 43.3L60.2 43.1L60.8 45.4L59.7 45.2L60.4 47.3L59.3 47.2L59.9 48.5L57.8 48.2L57.3 46.8L56.2 46.7L55.5 44.6L54.4 44.4L53.8 42.1L52.7 41.9L52.0 38.0L52.0 38.0L51.7 34.1L52.7 34.3L52.7 32.0L53.9 32.2L54.1 30.1L55.1 30.3L55.3 28.9ZM62.1 53.6L62.9 55.0L63.9 55.1L65.0 57.2L66.2 57.4L67.5 59.7L68.5 59.8L70.9 63.8L70.9 63.8L73.4 67.7L72.4 67.5L73.9 69.8L72.7 69.6L74.1 71.7L73.0 71.5L73.9 72.9L71.8 72.6L71.0 71.2L69.9 71.0L68.6 69.0L67.4 68.8L66.0 66.5L64.9 66.3L62.4 62.4L62.4 62.4L60.0 58.5L61.1 58.7L59.7 56.4L60.9 56.5L59.8 54.5L60.8 54.6L60.1 53.3ZM77.0 78.0L77.8 79.4L78.8 79.5L80.0 81.6L81.1 81.8L82.3 84.1L83.3 84.2L85.1 88.1L85.1 88.1L86.5 92.0L85.4 91.9L86.1 94.2L84.9 94.0L85.4 96.1L84.3 95.9L84.6 97.3L82.5 97.0L82.3 95.6L81.2 95.4L80.8 93.3L79.6 93.2L79.0 90.9L78.0 90.7L76.6 86.8L76.6 86.8L74.8 82.9L75.8 83.0L74.7 80.7L75.8 80.9L74.7 78.9L75.7 79.0L74.9 77.6ZM85.0 102.4L84.9 103.7L86.0 103.9L85.8 106.0L87.0 106.1L86.6 108.4L87.7 108.6L86.8 112.5L86.8 112.5L85.5 116.4L84.5 116.3L83.5 118.6L82.4 118.4L81.4 120.5L80.4 120.3L79.7 121.7L77.6 121.3L78.3 120.0L77.3 119.8L78.2 117.7L77.1 117.5L78.0 115.2L77.0 115.1L78.3 111.2L78.3 111.2L79.2 107.3L80.2 107.4L80.5 105.1L81.7 105.3L81.8 103.2L82.9 103.4L82.9 102.0ZM76.9 126.7L76.1 128.1L77.2 128.3L75.9 130.3L77.1 130.5L75.6 132.8L76.6 133.0L74.1 136.9L74.1 136.9L71.6 140.8L70.6 140.6L69.1 142.9L68.0 142.8L66.7 144.8L65.7 144.7L64.9 146.1L62.8 145.7L63.6 144.3L62.6 144.2L63.8 142.1L62.7 141.9L64.1 139.6L63.1 139.5L65.6 135.5L65.6 135.5L68.1 131.6L69.2 131.8L70.6 129.5L71.8 129.7L73.0 127.6L74.1 127.8L74.9 126.4ZM91.8 -18.2L91.2 -16.8L92.3 -16.7L91.3 -14.6L92.5 -14.5L91.4 -12.2L92.4 -12.1L90.3 -8.2L90.3 -8.2L87.9 -4.2L86.9 -4.3L85.4 -2.0L84.3 -2.2L83.0 -0.1L81.9 -0.2L81.0 1.2L79.0 0.9L79.9 -0.5L78.8 -0.6L80.1 -2.7L79.0 -2.8L80.4 -5.1L79.4 -5.3L81.7 -9.2L81.7 -9.2L83.9 -13.1L84.9 -13.0L86.1 -15.3L87.2 -15.1L88.1 -17.2L89.2 -17.0L89.7 -18.4ZM77.8 6.2L76.9 7.6L77.9 7.7L76.7 9.8L77.8 9.9L76.5 12.2L77.5 12.3L75.4 16.2L75.4 16.2L73.5 20.1L72.5 20.0L71.5 22.3L70.4 22.2L69.7 24.3L68.6 24.2L68.2 25.5L66.1 25.3L66.6 23.9L65.5 23.8L66.3 21.7L65.1 21.5L66.0 19.2L65.0 19.1L66.9 15.2L66.9 15.2L69.0 11.3L70.0 11.4L71.4 9.1L72.5 9.3L73.8 7.2L74.8 7.3L75.7 6.0ZM67.1 30.6L66.9 32.0L67.9 32.1L67.8 34.2L68.9 34.3L68.9 36.6L69.9 36.7L70.2 40.6L70.2 40.6L71.0 44.5L69.9 44.4L70.6 46.7L69.4 46.6L70.1 48.7L69.1 48.5L69.6 49.9L67.5 49.7L67.0 48.3L66.0 48.1L65.3 46.1L64.1 45.9L63.5 43.6L62.5 43.5L61.7 39.6L61.7 39.6L61.4 35.6L62.4 35.8L62.5 33.5L63.6 33.7L63.8 31.6L64.8 31.7L65.0 30.3ZM71.9 55.0L72.6 56.4L73.6 56.5L74.8 58.5L75.9 58.7L77.2 61.0L78.3 61.1L80.7 65.0L80.7 65.0L83.2 68.9L82.1 68.8L83.6 71.1L82.5 71.0L83.8 73.0L82.8 72.9L83.6 74.3L81.6 74.0L80.7 72.7L79.7 72.5L78.3 70.5L77.2 70.3L75.7 68.0L74.6 67.8L72.1 63.9L72.1 63.9L69.8 60.0L70.8 60.2L69.5 57.9L70.6 58.0L69.5 56.0L70.5 56.1L69.8 54.7ZM86.7 79.4L87.5 80.7L88.6 80.9L89.7 82.9L90.8 83.1L92.0 85.4L93.0 85.5L94.8 89.4L94.8 89.4L96.2 93.3L95.2 93.2L95.8 95.5L94.7 95.3L95.1 97.4L94.1 97.3L94.3 98.7L92.2 98.4L92.0 97.0L91.0 96.9L90.5 94.8L89.4 94.7L88.7 92.4L87.7 92.2L86.3 88.3L86.3 88.3L84.5 84.4L85.6 84.6L84.4 82.3L85.5 82.4L84.4 80.3L85.4 80.5L84.7 79.1ZM94.7 103.7L94.7 105.1L95.7 105.2L95.5 107.3L96.7 107.4L96.4 109.7L97.4 109.8L96.5 113.7L96.5 113.7L95.2 117.7L94.2 117.6L93.3 119.9L92.1 119.7L91.2 121.8L90.1 121.7L89.4 123.1L87.4 122.8L88.1 121.4L87.0 121.3L88.0 119.2L86.8 119.1L87.7 116.8L86.7 116.6L88.0 112.7L88.0 112.7L88.9 108.8L89.9 108.9L90.2 106.6L91.4 106.8L91.5 104.7L92.6 104.9L92.6 103.5ZM86.7 128.1L85.9 129.5L86.9 129.6L85.6 131.7L86.8 131.8L85.3 134.1L86.4 134.2L83.9 138.1L83.9 138.1L81.3 142.0L80.3 141.9L78.9 144.2L77.7 144.1L76.4 146.2L75.4 146.1L74.6 147.4L72.5 147.2L73.3 145.8L72.3 145.7L73.6 143.6L72.4 143.4L73.9 141.1L72.8 141.0L75.3 137.1L75.3 137.1L77.9 133.2L78.9 133.3L80.3 131.0L81.5 131.2L82.8 129.1L83.8 129.2L84.6 127.9ZM101.5 -17.4L101.0 -16.0L102.0 -16.0L101.1 -13.9L102.2 -13.9L101.1 -11.6L102.1 -11.6L100.0 -7.7L100.0 -7.7L97.6 -3.8L96.6 -3.8L95.2 -1.5L94.0 -1.5L92.7 0.6L91.7 0.5L90.8 1.9L88.7 1.8L89.6 0.4L88.5 0.4L89.9 -1.7L88.7 -1.8L90.2 -4.1L89.1 -4.1L91.5 -8.1L91.5 -8.1L93.6 -12.0L94.7 -11.9L95.8 -14.2L96.9 -14.1L97.9 -16.2L98.9 -16.1L99.5 -17.5ZM87.5 7.0L86.6 8.4L87.7 8.4L86.4 10.4L87.6 10.5L86.2 12.8L87.2 12.8L85.1 16.7L85.1 16.7L83.2 20.6L82.2 20.6L81.3 22.9L80.1 22.9L79.4 24.9L78.4 24.9L77.9 26.3L75.9 26.2L76.3 24.8L75.2 24.8L76.0 22.7L74.8 22.6L75.8 20.3L74.7 20.2L76.6 16.3L76.6 16.3L78.7 12.4L79.8 12.5L81.1 10.2L82.3 10.3L83.5 8.2L84.6 8.3L85.4 6.9ZM76.8 31.4L76.6 32.7L77.7 32.8L77.5 34.8L78.6 34.8L78.6 37.1L79.6 37.1L79.9 41.1L79.9 41.1L80.7 45.0L79.7 45.0L80.3 47.3L79.1 47.2L79.8 49.3L78.8 49.3L79.3 50.7L77.3 50.6L76.7 49.2L75.7 49.1L75.0 47.1L73.9 47.0L73.2 44.7L72.2 44.6L71.4 40.7L71.4 40.7L71.1 36.8L72.2 36.9L72.2 34.6L73.3 34.7L73.5 32.6L74.5 32.6L74.7 31.3ZM81.6 55.7L82.3 57.1L83.4 57.1L84.5 59.2L85.6 59.2L87.0 61.5L88.0 61.5L90.4 65.4L90.4 65.4L92.9 69.3L91.9 69.3L93.3 71.6L92.2 71.6L93.5 73.7L92.5 73.7L93.4 75.1L91.3 75.0L90.4 73.6L89.4 73.5L88.0 71.5L86.9 71.4L85.4 69.1L84.4 69.0L81.9 65.1L81.9 65.1L79.5 61.2L80.5 61.3L79.2 59.0L80.3 59.0L79.2 57.0L80.2 57.0L79.5 55.6ZM96.5 80.1L97.2 81.5L98.3 81.5L99.4 83.6L100.6 83.6L101.7 85.9L102.8 85.9L104.5 89.8L104.5 89.8L105.9 93.7L104.9 93.7L105.5 96.0L104.4 96.0L104.8 98.1L103.8 98.1L104.0 99.4L102.0 99.3L101.7 98.0L100.7 97.9L100.2 95.8L99.1 95.8L98.5 93.5L97.4 93.4L96.0 89.5L96.0 89.5L94.3 85.6L95.3 85.6L94.1 83.3L95.3 83.4L94.1 81.3L95.2 81.4L94.4 80.0ZM104.4 104.5L104.4 105.9L105.4 105.9L105.3 108.0L106.4 108.0L106.1 110.3L107.1 110.3L106.2 114.2L106.2 114.2L105.0 118.1L103.9 118.1L103.0 120.4L101.8 120.4L100.9 122.5L99.9 122.4L99.2 123.8L97.1 123.7L97.8 122.3L96.7 122.3L97.7 120.2L96.5 120.1L97.5 117.8L96.4 117.8L97.7 113.8L97.7 113.8L98.6 109.9L99.7 110.0L100.0 107.7L101.1 107.8L101.3 105.7L102.3 105.8L102.3 104.4ZM96.4 128.9L95.6 130.3L96.6 130.3L95.4 132.3L96.5 132.4L95.1 134.7L96.1 134.7L93.6 138.6L93.6 138.6L91.1 142.5L90.0 142.5L88.6 144.8L87.4 144.8L86.2 146.8L85.1 146.8L84.3 148.2L82.3 148.1L83.1 146.7L82.0 146.7L83.3 144.6L82.1 144.5L83.6 142.2L82.6 142.1L85.1 138.2L85.1 138.2L87.6 134.3L88.6 134.4L90.1 132.1L91.2 132.2L92.5 130.1L93.5 130.2L94.3 128.8ZM97.2 6.8L96.4 8.2L97.4 8.1L96.1 10.2L97.3 10.1L95.9 12.4L97.0 12.3L94.8 16.2L94.8 16.2L93.0 20.1L91.9 20.2L91.0 22.5L89.9 22.6L89.1 24.7L88.1 24.7L87.7 26.1L85.6 26.2L86.0 24.9L85.0 24.9L85.7 22.8L84.6 22.9L85.5 20.6L84.5 20.6L86.3 16.7L86.3 16.7L88.5 12.8L89.5 12.7L90.8 10.4L92.0 10.4L93.3 8.3L94.3 8.3L95.2 6.9ZM86.5 31.2L86.3 32.6L87.4 32.5L87.2 34.6L88.4 34.5L88.3 36.8L89.4 36.7L89.7 40.6L89.7 40.6L90.4 44.5L89.4 44.6L90.0 46.9L88.9 47.0L89.6 49.0L88.5 49.1L89.1 50.5L87.0 50.6L86.5 49.2L85.4 49.3L84.7 47.2L83.6 47.2L82.9 44.9L81.9 45.0L81.2 41.1L81.2 41.1L80.9 37.1L81.9 37.1L81.9 34.8L83.1 34.8L83.2 32.7L84.3 32.7L84.5 31.3ZM91.3 55.6L92.0 56.9L93.1 56.9L94.2 58.9L95.4 58.8L96.7 61.1L97.7 61.0L100.1 65.0L100.1 65.0L102.6 68.9L101.6 69.0L103.1 71.3L101.9 71.4L103.3 73.4L102.2 73.5L103.1 74.9L101.0 75.0L100.1 73.6L99.1 73.7L97.8 71.6L96.6 71.6L95.1 69.3L94.1 69.3L91.6 65.4L91.6 65.4L89.2 61.5L90.2 61.5L88.9 59.2L90.1 59.2L88.9 57.1L90.0 57.1L89.3 55.7ZM106.1 128.7L105.3 130.1L106.4 130.0L105.1 132.1L106.2 132.0L104.8 134.3L105.8 134.2L103.3 138.1L103.3 138.1L100.8 142.0L99.8 142.1L98.3 144.4L97.2 144.5L95.9 146.6L94.9 146.6L94.1 148.0L92.0 148.1L92.8 146.8L91.8 146.8L93.0 144.7L91.9 144.8L93.3 142.5L92.3 142.5L94.8 138.6L94.8 138.6L97.3 134.7L98.3 134.6L99.8 132.3L100.9 132.3L102.2 130.2L103.2 130.2L104.1 128.8ZM107.0 5.8L106.1 7.1L107.1 7.0L105.9 9.1L107.0 8.9L105.7 11.2L106.7 11.0L104.6 15.0L104.6 15.0L102.7 18.9L101.7 19.0L100.7 21.3L99.6 21.5L98.8 23.6L97.8 23.7L97.4 25.1L95.3 25.4L95.7 24.0L94.7 24.1L95.4 22.0L94.3 22.2L95.2 19.9L94.2 20.0L96.0 16.1L96.0 16.1L98.2 12.2L99.2 12.1L100.6 9.8L101.7 9.6L103.0 7.5L104.0 7.4L104.9 6.0ZM96.3 30.1L96.1 31.5L97.1 31.4L96.9 33.4L98.1 33.3L98.1 35.6L99.1 35.4L99.4 39.3L99.4 39.3L100.1 43.2L99.1 43.4L99.8 45.7L98.6 45.9L99.3 47.9L98.3 48.1L98.8 49.5L96.7 49.7L96.2 48.4L95.2 48.5L94.5 46.4L93.3 46.6L92.7 44.3L91.6 44.4L90.9 40.5L90.9 40.5L90.6 36.5L91.6 36.4L91.7 34.1L92.8 34.0L93.0 31.9L94.0 31.8L94.2 30.4Z"/></svg></div>
<div class="num" style="left:99.6px;top:159.1px;width:15.0px"><span>1</span></div>
<div class="th" style="left:246.7px;top:2.9px"><svg class="pat" width="98" height="136" viewBox="0 0 98 136"><rect width="98" height="136" fill="url(#d2)"/><rect width="98" height="136" fill="url(#l2)" mask="url(#m)"/></svg></div>
<div class="num" style="left:314.2px;top:159.1px;width:15.0px"><span>2</span></div>
<div class="th" style="left:461.4px;top:2.9px"><svg class="pat" width="98" height="136" viewBox="0 0 98 136"><rect width="98" height="136" fill="url(#d3)"/><rect width="98" height="136" fill="url(#l3)" mask="url(#m)"/></svg></div>
<div class="num" style="left:528.9px;top:159.1px;width:15.0px"><span>3</span></div>
<div class="th" style="left:676.0px;top:2.9px"><svg class="pat" width="98" height="136" viewBox="0 0 98 136"><rect width="98" height="136" fill="url(#d4)"/><rect width="98" height="136" fill="url(#l4)" mask="url(#m)"/><rect width="98" height="136" fill="#402030" mask="url(#md)" opacity="0.35"/><rect width="98" height="136" fill="url(#vg)"/></svg></div>
<div class="num" style="left:743.5px;top:159.1px;width:15.0px"><span>4</span></div>
<div class="th" style="left:32.1px;top:217.4px"><svg class="pat" width="98" height="136" viewBox="0 0 98 136"><rect width="98" height="136" fill="url(#d5)"/><rect width="98" height="136" fill="url(#l5)" mask="url(#m)"/><rect width="98" height="136" fill="url(#vg)"/></svg></div>
<div class="num" style="left:99.6px;top:373.6px;width:15.0px"><span>5</span></div>
<div class="th" style="left:246.7px;top:217.4px"><svg class="pat" width="98" height="136" viewBox="0 0 98 136"><rect width="98" height="136" fill="#d8c8dc"/><rect width="98" height="136" fill="#dbdcca" mask="url(#m)"/></svg></div>
<div class="num" style="left:314.2px;top:373.6px;width:15.0px"><span>6</span></div>
<div class="th" style="left:461.4px;top:217.4px"><svg class="pat" width="98" height="136" viewBox="0 0 98 136"><rect width="98" height="136" fill="#9a5c40"/><rect width="98" height="136" fill="#f8b8a0" mask="url(#m)"/></svg></div>
<div class="num" style="left:528.9px;top:373.6px;width:15.0px"><span>7</span></div>
<div class="th" style="left:676.0px;top:217.4px"><svg class="pat" width="98" height="136" viewBox="0 0 98 136"><rect width="98" height="136" fill="url(#d8)"/><rect width="98" height="136" fill="url(#l8)" mask="url(#m)"/></svg></div>
<div class="num" style="left:743.5px;top:373.6px;width:15.0px"><span>8</span></div>
<div class="th" style="left:32.1px;top:432.0px"><svg class="pat" width="98" height="136" viewBox="0 0 98 136"><rect width="98" height="136" fill="#f0deee"/><rect width="98" height="136" fill="#fcecf8" mask="url(#m)"/><rect width="98" height="136" fill="#b090b0" mask="url(#md)" opacity="0.4"/></svg></div>
<div class="num" style="left:99.6px;top:588.2px;width:15.0px"><span>9</span></div>
<div class="th" style="left:246.7px;top:432.0px"><svg class="pat" width="98" height="136" viewBox="0 0 98 136"><rect width="98" height="136" fill="#f3e6e6"/><rect width="98" height="136" fill="#fdf1f1" mask="url(#m)"/><rect width="98" height="136" fill="#c0a0a0" mask="url(#md)" opacity="0.35"/></svg></div>
<div class="num" style="left:309.4px;top:588.2px;width:24.6px"><span>10</span></div>
<div class="th" style="left:461.4px;top:432.0px"><svg class="pat" width="98" height="136" viewBox="0 0 98 136"><rect width="98" height="136" fill="#eeccce"/><rect width="98" height="136" fill="#fde0e0" mask="url(#m)"/><rect width="98" height="136" fill="#a07080" mask="url(#md)" opacity="0.4"/></svg></div>
<div class="num" style="left:524.1px;top:588.2px;width:24.6px"><span>11</span></div>
<div class="th" style="left:676.0px;top:432.0px"><svg class="pat" width="98" height="136" viewBox="0 0 98 136"><rect width="98" height="136" fill="#883878"/><rect width="98" height="136" fill="#f098e8" mask="url(#m)"/></svg></div>
<div class="num" style="left:738.8px;top:588.2px;width:24.6px"><span>12</span></div>
<div class="th" style="left:32.1px;top:646.5px"><svg class="pat" width="98" height="136" viewBox="0 0 98 136"><rect width="98" height="136" fill="#c8e4e4"/><rect width="98" height="136" fill="#e0f4f4" mask="url(#m)"/><rect width="98" height="136" fill="#708888" mask="url(#md)" opacity="0.5"/></svg></div>
<div class="th" style="left:246.7px;top:646.5px"><svg class="pat" width="98" height="136" viewBox="0 0 98 136"><rect width="98" height="136" fill="#e4d0a8"/><rect width="98" height="136" fill="#fce8c8" mask="url(#m)"/><rect width="98" height="136" fill="#907850" mask="url(#md)" opacity="0.5"/></svg></div>
<div class="th" style="left:461.4px;top:646.5px"><svg class="pat" width="98" height="136" viewBox="0 0 98 136"><rect width="98" height="136" fill="#e8a8ac"/><rect width="98" height="136" fill="#fcc8c8" mask="url(#m)"/><rect width="98" height="136" fill="#a06068" mask="url(#md)" opacity="0.5"/></svg></div>
<div class="th" style="left:676.0px;top:646.5px"><svg class="pat" width="98" height="136" viewBox="0 0 98 136"><rect width="98" height="136" fill="#dca890"/><rect width="98" height="136" fill="#fcd0c0" mask="url(#m)"/><rect width="98" height="136" fill="#906048" mask="url(#md)" opacity="0.5"/></svg></div>
  <div class="abs" id="sb"><div class="abs" id="sbt"></div></div>
 </div>
 <div class="abs btn" style="left:459px;top:814px">
  <div class="ic"><svg width="30" height="29" viewBox="0 0 30 29"><path d="M5.6 17.4 L11.6 23.8 L25.6 7.6" stroke="#0a4412" stroke-width="4.6" fill="none" stroke-linejoin="miter"/><path d="M5 16.4 L11 22.8 L25 6.6" stroke="#169c22" stroke-width="4.6" fill="none" stroke-linejoin="miter"/><path d="M4.6 14.8 L10.8 21 L23.8 5.8" stroke="#4cd050" stroke-width="1.3" fill="none" opacity=".8"/></svg></div>
  <div class="tx" style="left:49px;transform:scale(.93,1.08)"><u>I</u>mport</div>
 </div>
 <div class="abs btn" style="left:594px;top:814px">
  <div class="ic"><svg width="30" height="29" viewBox="0 0 30 29"><path d="M7.3 9.3 L22.3 23.8 M22.8 7.3 L6.3 24.8" stroke="#64060c" stroke-width="5" stroke-linecap="round" fill="none"/><path d="M6.5 8.5 L21.5 23 M22 6.5 L5.5 24" stroke="#b01018" stroke-width="5" stroke-linecap="round" fill="none"/></svg></div>
  <div class="tx" style="left:45px"><u>C</u>ancel</div>
 </div>
 <div class="abs lbl" style="left:862px;top:828.2px;transform:scaleY(1.1)">Double click image to see larger preview</div>
</div>
</body></html>
